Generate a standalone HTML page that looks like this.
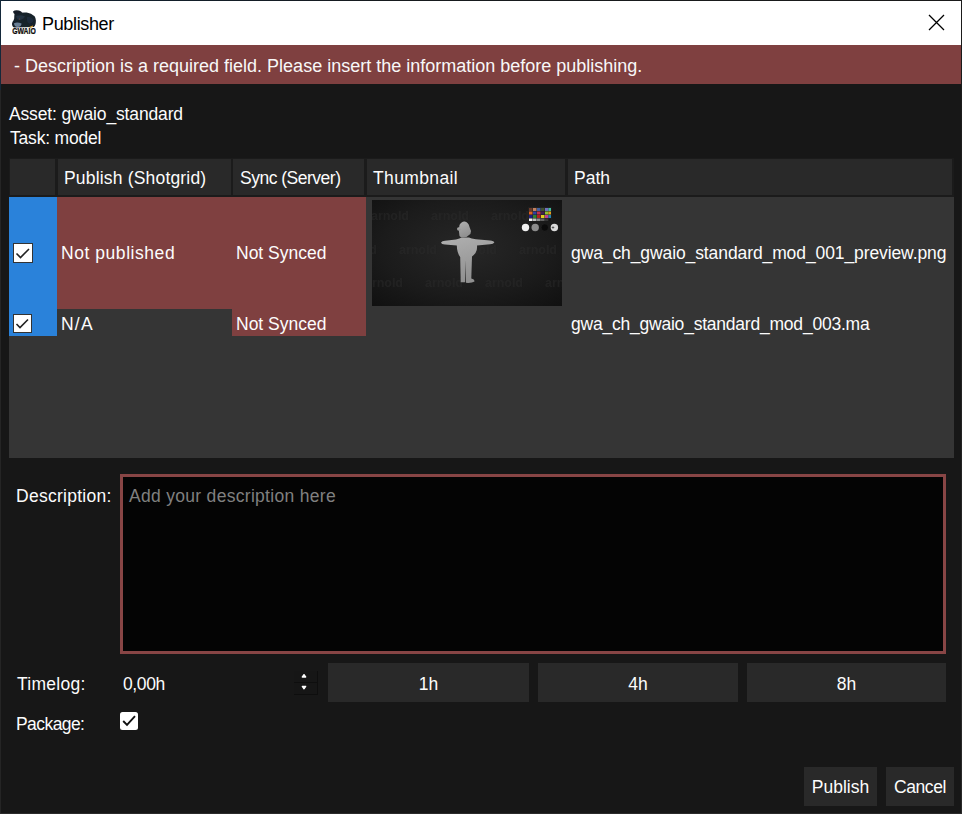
<!DOCTYPE html>
<html><head><meta charset="utf-8">
<style>
*{box-sizing:border-box;}
html,body{margin:0;padding:0;width:962px;height:814px;overflow:hidden;background:#2b2b2b;}
body{position:relative;font-family:"Liberation Sans",sans-serif;font-size:17.5px;color:#fcfcfc;}
.a{position:absolute;}
.t{position:absolute;white-space:nowrap;line-height:20px;height:20px;}
#win{position:absolute;left:1px;top:1px;width:960px;height:812px;background:#171717;}
#title{position:absolute;left:1px;top:1px;width:960px;height:44px;background:#ffffff;}
#banner{position:absolute;left:1px;top:45px;width:960px;height:39px;background:#7f4040;}
.hdr{position:absolute;top:159px;height:36px;background:#292929;}
.btn{position:absolute;background:#292929;}
</style></head><body>
<!-- window borders -->
<div class="a" style="left:0;top:0;width:962px;height:1px;background:linear-gradient(90deg,#0f2233,#161a1e 40%,#1a1a1a)"></div>
<div class="a" style="left:0;top:0;width:1px;height:90px;background:#14283a"></div><div class="a" style="left:0;top:90px;width:1px;height:724px;background:#252525"></div>
<div class="a" style="left:961px;top:0;width:1px;height:814px;background:linear-gradient(180deg,#1a1a1a,#2a2a2a)"></div><div class="a" style="left:0;top:813px;width:962px;height:1px;background:#2b2b2b"></div>
<div id="win"></div>
<div id="title"></div>
<!-- icon -->
<svg class="a" style="left:12px;top:10px" width="24" height="24" viewBox="0 0 24 24">
  <defs><filter id="ib" x="-10%" y="-10%" width="120%" height="120%"><feGaussianBlur stdDeviation="0.3"/></filter></defs>
  <g filter="url(#ib)">
  <path d="M1 1.4 Q3 -0.3 7 0.5 Q9.5 1.2 10.5 3.2 L3 4.6 Q1 3 1 1.4 Z" fill="#161d26"/>
  <path d="M2.65 3.8 Q8 2.4 14.7 2.6 Q19.3 3.4 22.6 6.3 Q24 8.5 23.9 10.5 Q23.9 13 23.4 14.6 Q22.8 16.3 21.8 17.1 L2.2 17.5 Q0.9 17.2 0.6 16.3 Q-0.1 15 0 13.8 Q0.2 12.5 0.6 11.7 Q1.8 10 2.2 8.4 Q2.2 5.5 2.65 3.8 Z" fill="#18202b"/>
  <path d="M4 6 Q9 4.5 13 6.5 Q11 10 7 10 Q4.5 9 4 6 Z" fill="#2a3848" opacity="0.7"/>
  <path d="M15 7 Q19.5 6.5 21.5 10 Q20.5 13.5 17 13.5 Q14.5 11 15 7 Z" fill="#223040" opacity="0.8"/>
  <path d="M2 13.2 Q5.5 11.8 9.5 13.5 Q9.5 16.8 5.5 17 Q2.2 16.8 2 13.2 Z" fill="#8098b2" opacity="0.8"/>
  <circle cx="7.5" cy="9" r="0.45" fill="#905030"/>
  <path d="M17.5 17.6 L21 16" stroke="#d8a030" stroke-width="1.3"/>
  </g>
  <text x="12" y="23.9" font-family="Liberation Sans" font-weight="bold" font-size="8.4" text-anchor="middle" textLength="23.6" lengthAdjust="spacingAndGlyphs" fill="#0a0a0a" stroke="#0a0a0a" stroke-width="0.25">GWAIO</text>
  <path d="M7.3 19 L8.8 23.5 M12.6 19 L13.1 23.5" stroke="#c89a30" stroke-width="0.6" opacity="0.6"/>
</svg>
<div class="t" style="left:42px;top:14px;font-size:18px;letter-spacing:-0.35px;color:#000">Publisher</div>
<!-- close X -->
<svg class="a" style="left:928px;top:14px" width="17" height="17" viewBox="0 0 17 17">
  <path d="M1 1 L16 16 M16 1 L1 16" stroke="#000" stroke-width="1.3"/>
</svg>
<div id="banner"></div>
<div class="t" style="left:14px;top:56px;font-size:18px;color:#f8f8f8">- Description is a required field. Please insert the information before publishing.</div>

<div class="t" style="left:9px;top:104px;letter-spacing:-0.15px">Asset: gwaio_standard</div>
<div class="t" style="left:10px;top:128px;letter-spacing:-0.2px">Task: model</div>

<!-- table -->
<div class="a" style="left:9px;top:158px;width:945px;height:39px;background:#1b1b1b"></div>
<div class="hdr" style="left:10px;width:45px"></div>
<div class="hdr" style="left:58px;width:173px"></div>
<div class="hdr" style="left:233px;width:131px"></div>
<div class="hdr" style="left:367px;width:198px"></div>
<div class="hdr" style="left:568px;width:384px"></div>
<div class="t" style="left:64px;top:168px;letter-spacing:0.18px">Publish (Shotgrid)</div>
<div class="t" style="left:240px;top:168px;letter-spacing:-0.5px">Sync (Server)</div>
<div class="t" style="left:373px;top:168px;letter-spacing:0.37px">Thumbnail</div>
<div class="t" style="left:574px;top:168px">Path</div>

<div class="a" style="left:9px;top:197px;width:945px;height:261px;background:#353535"></div>
<div class="a" style="left:9px;top:197px;width:48px;height:139px;background:#2a82da"></div>
<div class="a" style="left:57px;top:197px;width:309px;height:112px;background:#7f4040"></div>
<div class="a" style="left:232px;top:309px;width:134px;height:27px;background:#7f4040"></div>

<!-- checkboxes -->
<svg class="a" style="left:13px;top:243px" width="20" height="20" viewBox="0 0 20 20">
  <rect x="0.5" y="0.5" width="19" height="19" fill="#fff" stroke="#333"/>
  <path d="M3.5 10.5 L7.5 14.5 L16 6" fill="none" stroke="#222" stroke-width="1.6"/>
</svg>
<svg class="a" style="left:13px;top:314px" width="19" height="19" viewBox="0 0 19 19">
  <rect x="0.5" y="0.5" width="18" height="18" fill="#fff" stroke="#333"/>
  <path d="M3.5 10 L7 13.5 L15 5.5" fill="none" stroke="#222" stroke-width="1.6"/>
</svg>

<div class="t" style="left:61px;top:243px;letter-spacing:0.55px">Not published</div>
<div class="t" style="left:236px;top:243px">Not Synced</div>
<div class="t" style="left:571px;top:243px;letter-spacing:-0.1px">gwa_ch_gwaio_standard_mod_001_preview.png</div>
<div class="t" style="left:61px;top:314px;letter-spacing:1.2px">N/A</div>
<div class="t" style="left:236px;top:314px">Not Synced</div>
<div class="t" style="left:571px;top:314px;letter-spacing:-0.22px">gwa_ch_gwaio_standard_mod_003.ma</div>

<!-- thumbnail -->
<svg class="a" style="left:372px;top:200px" width="190" height="106" viewBox="0 0 190 106">
  <defs>
    <radialGradient id="vg" cx="0.5" cy="0.45" r="0.75">
      <stop offset="0" stop-color="#272727"/>
      <stop offset="0.6" stop-color="#1b1b1b"/>
      <stop offset="1" stop-color="#101010"/>
    </radialGradient>
    <linearGradient id="fg" x1="0" y1="0" x2="0.3" y2="1">
      <stop offset="0" stop-color="#b0b0b0"/>
      <stop offset="1" stop-color="#909090"/>
    </linearGradient>
    <filter id="fb" x="-20%" y="-20%" width="140%" height="140%"><feGaussianBlur stdDeviation="0.45"/></filter>
    <filter id="wb"><feGaussianBlur stdDeviation="0.5"/></filter>
  </defs>
  <rect width="190" height="106" fill="url(#vg)"/>
  <g font-family="Liberation Sans" font-weight="bold" font-size="12.5" fill="#2c2c2c" opacity="0.5" filter="url(#wb)">
    <text x="-1" y="20" textLength="38">arnold</text><text x="59" y="20" textLength="38">arnold</text><text x="119" y="20" textLength="38">arnold</text>
    <text x="-33" y="54" textLength="38">arnold</text><text x="27" y="54" textLength="38">arnold</text><text x="87" y="54" textLength="38">arnold</text><text x="147" y="54" textLength="38">arnold</text>
    <text x="-7" y="87" textLength="38">arnold</text><text x="53" y="87" textLength="38">arnold</text><text x="113" y="87" textLength="38">arnold</text><text x="173" y="87" textLength="38">arnold</text>
  </g>
  <g fill="url(#fg)" filter="url(#fb)">
    <path d="M69 42.5 Q70 40.8 73 40.8 L84 39.5 Q88 38.5 89.5 37.5 L97 37.5 Q99 38.5 104 39.3 L118 40.5 Q122 41 122.3 42.5 Q121.5 44 118 44.2 L105 45.5 Q105.5 50 103.5 53 Q101.5 55.5 100 56.5 L99.3 78.5 Q102.5 79 102.5 81.5 Q100 83.2 94 82.8 L93.8 60 L93.2 82.3 L88.7 82.3 L88.2 57 Q85 53 84.8 45.5 L73 44.5 Q69.5 44.3 69 42.5 Z"/>
    <path d="M87.5 36 Q86 30 87.5 25 Q89.5 21.3 92.5 21.5 Q96.5 22 97.5 27 L99 31 Q99 34 97 35 Q95 37.5 91 37.5 Q88.5 37.5 87.5 36 Z"/>
    <circle cx="86.8" cy="29" r="1.8"/>
  </g>
  <g>
    <rect x="156" y="7" width="23.5" height="14" fill="#202020"/>
    <rect x="157" y="8" width="3.5" height="3" fill="#6a3a2a"/><rect x="161" y="8" width="3.5" height="3" fill="#c08060"/><rect x="165" y="8" width="3.5" height="3" fill="#4060a0"/><rect x="169" y="8" width="3.5" height="3" fill="#405030"/><rect x="173" y="8" width="3.5" height="3" fill="#7070c0"/><rect x="176.5" y="8" width="2.5" height="3" fill="#40c0a0"/>
    <rect x="157" y="11.5" width="3.5" height="3" fill="#e06020"/><rect x="161" y="11.5" width="3.5" height="3" fill="#3040a0"/><rect x="165" y="11.5" width="3.5" height="3" fill="#c03050"/><rect x="169" y="11.5" width="3.5" height="3" fill="#402050"/><rect x="173" y="11.5" width="3.5" height="3" fill="#90c030"/><rect x="176.5" y="11.5" width="2.5" height="3" fill="#e0a020"/>
    <rect x="157" y="15" width="3.5" height="3" fill="#202080"/><rect x="161" y="15" width="3.5" height="3" fill="#308030"/><rect x="165" y="15" width="3.5" height="3" fill="#b02020"/><rect x="169" y="15" width="3.5" height="3" fill="#e0d020"/><rect x="173" y="15" width="3.5" height="3" fill="#c04090"/><rect x="176.5" y="15" width="2.5" height="3" fill="#2080b0"/>
    <rect x="157" y="18.5" width="3.5" height="2.5" fill="#f0f0f0"/><rect x="161" y="18.5" width="3.5" height="2.5" fill="#c0c0c0"/><rect x="165" y="18.5" width="3.5" height="2.5" fill="#909090"/><rect x="169" y="18.5" width="3.5" height="2.5" fill="#606060"/><rect x="173" y="18.5" width="3.5" height="2.5" fill="#353535"/><rect x="176.5" y="18.5" width="2.5" height="2.5" fill="#151515"/>
  </g>
  <circle cx="153.5" cy="27.5" r="3.7" fill="#f0f0f0"/>
  <circle cx="163.2" cy="27.5" r="3.7" fill="#8c8c8c"/>
  <circle cx="172.8" cy="27.5" r="3.7" fill="#0b0b0b" stroke="#262626" stroke-width="0.5"/>
  <circle cx="182.4" cy="27.5" r="3.7" fill="#dadada"/>
  <path d="M179.5 27.5 Q181 25.5 182.5 27.5 Q181 29.5 179.5 27.5 Z" fill="#555"/>
</svg>

<!-- description -->
<div class="t" style="left:16px;top:486px;letter-spacing:0.27px">Description:</div>
<div class="a" style="left:120px;top:474px;width:826px;height:180px;background:#040404;border:3px solid #884545"></div>
<div class="t" style="left:129px;top:486px;color:#808080;letter-spacing:0.3px">Add your description here</div>

<!-- timelog -->
<div class="t" style="left:17px;top:674px;letter-spacing:0.28px">Timelog:</div>
<div class="t" style="left:123px;top:674px;letter-spacing:-0.4px">0,00h</div>
<div class="a" style="left:294px;top:671px;width:24px;height:24px;background:#161616"></div>
<div class="a" style="left:317px;top:671px;width:1px;height:24px;background:#0e0e0e"></div>
<div class="a" style="left:294px;top:682px;width:24px;height:1px;background:#0e0e0e"></div>
<div class="a" style="left:294px;top:694px;width:24px;height:1px;background:#0e0e0e"></div>
<svg class="a" style="left:296px;top:671px" width="16" height="24" viewBox="0 0 16 24">
  <path d="M6.3 6 L8 3.6 L9.7 6 Z M6.3 15.4 L8 17.8 L9.7 15.4 Z" fill="#fff" stroke="#fff" stroke-width="1.3" stroke-linejoin="round"/>
</svg>
<div class="btn" style="left:328px;top:663px;width:201px;height:39px"></div>
<div class="btn" style="left:538px;top:663px;width:200px;height:39px"></div>
<div class="btn" style="left:747px;top:663px;width:199px;height:39px"></div>
<div class="t" style="left:328px;width:201px;top:674px;text-align:center">1h</div>
<div class="t" style="left:538px;width:200px;top:674px;text-align:center">4h</div>
<div class="t" style="left:747px;width:199px;top:674px;text-align:center">8h</div>

<!-- package -->
<div class="t" style="left:16px;top:714px;letter-spacing:-0.57px">Package:</div>
<svg class="a" style="left:120px;top:712px" width="18" height="18" viewBox="0 0 18 18">
  <rect x="0" y="0" width="18" height="18" rx="2.5" fill="#fff"/>
  <path d="M3.2 9 L7 12.8 L15 4.2" fill="none" stroke="#111" stroke-width="1.9"/>
</svg>

<!-- bottom buttons -->
<div class="btn" style="left:804px;top:767px;width:73px;height:39px"></div>
<div class="btn" style="left:886px;top:767px;width:68px;height:39px"></div>
<div class="t" style="left:804px;width:73px;top:777px;text-align:center">Publish</div>
<div class="t" style="left:886px;width:68px;top:777px;text-align:center;letter-spacing:-0.4px">Cancel</div>
</body></html>
